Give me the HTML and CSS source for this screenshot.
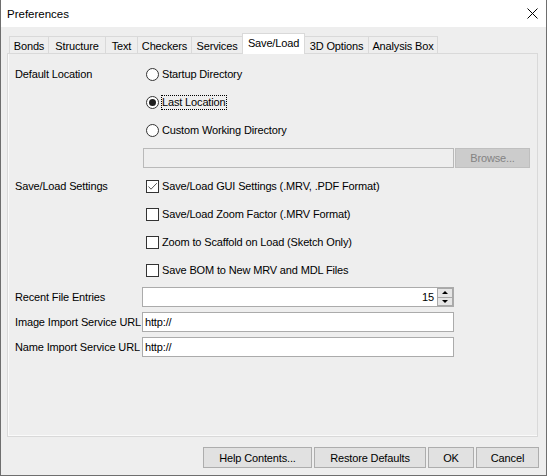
FILE: index.html
```html
<!DOCTYPE html>
<html>
<head>
<meta charset="utf-8">
<link rel="stylesheet" href="styles.css">
</head>
<body>
<div class="window">
  <div class="titlebar">
    <span class="title">Preferences</span>
    <svg class="close" width="11" height="11" viewBox="0 0 11 11"><path d="M0.5 0.5 L10.5 10.5 M10.5 0.5 L0.5 10.5" stroke="#000" stroke-width="1" fill="none"/></svg>
  </div>
  <div class="main">
    <div class="tabs">
      <div class="tab w-bonds">Bonds</div>
      <div class="tab w-structure">Structure</div>
      <div class="tab w-text">Text</div>
      <div class="tab w-checkers">Checkers</div>
      <div class="tab w-services">Services</div>
      <div class="tab active w-saveload">Save/Load</div>
      <div class="tab w-3d">3D Options</div>
      <div class="tab w-analysis">Analysis Box</div>
    </div>
    <div class="panel">
      <div class="row">
        <div class="label">Default Location</div>
        <div class="opt"><span class="radio"></span><span>Startup Directory</span></div>
      </div>
      <div class="row">
        <div class="label"></div>
        <div class="opt"><span class="radio checked"></span><span class="focus">Last Location</span></div>
      </div>
      <div class="row">
        <div class="label"></div>
        <div class="opt"><span class="radio"></span><span>Custom Working Directory</span></div>
      </div>
      <div class="row">
        <div class="label"></div>
        <div class="dirline"><div class="field disabled dirfield"></div><div class="btn disabled-btn browse">Browse...</div></div>
      </div>
      <div class="row">
        <div class="label">Save/Load Settings</div>
        <div class="opt"><span class="check"><svg width="11" height="11" viewBox="0 0 11 11"><path d="M1.5 5.5 L4 8.2 L9.8 2.2" stroke="#555" stroke-width="1" fill="none"/></svg></span><span>Save/Load GUI Settings (.MRV, .PDF Format)</span></div>
      </div>
      <div class="row">
        <div class="label"></div>
        <div class="opt"><span class="check"></span><span>Save/Load Zoom Factor (.MRV Format)</span></div>
      </div>
      <div class="row">
        <div class="label"></div>
        <div class="opt"><span class="check"></span><span>Zoom to Scaffold on Load (Sketch Only)</span></div>
      </div>
      <div class="row">
        <div class="label"></div>
        <div class="opt"><span class="check"></span><span>Save BOM to New MRV and MDL Files</span></div>
      </div>
      <div class="fields">
        <div class="label">Recent File Entries</div>
        <div class="field spinner">
          <div class="spin-val">15</div>
          <div class="spin-btns"><div class="spin-btn"><span class="arr-up"></span></div><div class="spin-btn"><span class="arr-down"></span></div></div>
        </div>
        <div class="label">Image Import Service URL</div>
        <div class="field url">http://</div>
        <div class="label">Name Import Service URL</div>
        <div class="field url">http://</div>
      </div>
    </div>
    <div class="buttons">
      <div class="btn w-help">Help Contents...</div>
      <div class="btn w-restore">Restore Defaults</div>
      <div class="btn w-ok">OK</div>
      <div class="btn w-cancel">Cancel</div>
    </div>
  </div>
</div>
</body>
</html>
```
FILE: styles.css
```css
* { box-sizing: border-box; }
body {
  margin: 0;
  font-family: "Liberation Sans", Arial, sans-serif;
  font-size: 11px;
  letter-spacing: -0.15px;
  color: #000;
  background: #fff;
}
.window {
  width: 547px;
  height: 476px;
  border: 1px solid #6e6e6e;
  border-top: none;
  background: #eeeeee;
  display: flex;
  flex-direction: column;
}
.titlebar {
  height: 27px;
  flex: none;
  background: #fff;
  display: flex;
  align-items: center;
  justify-content: space-between;
  padding: 0 8px 0 6px;
}
.title { font-size: 11.5px; letter-spacing: 0; }
.close { display: block; }
.main {
  flex: 1;
  padding: 6px 8px 0 6px;
  display: flex;
  flex-direction: column;
}
.tabs {
  display: flex;
  align-items: flex-end;
  height: 20px;
  margin-left: 2px;
  position: relative;
  z-index: 1;
}
.tab {
  height: 17px;
  border: 1px solid #d9d9d9;
  border-bottom: none;
  border-right: none;
  background: #eeeeee;
  display: flex;
  align-items: center;
  justify-content: center;
  padding-top: 1px;
}
.tab:last-child { border-right: 1px solid #d9d9d9; }
.tab.active {
  height: 21px;
  margin-bottom: -1px;
  background: #fff;
  border-right: 1px solid #d9d9d9;
  padding-top: 0;
  padding-bottom: 2px;
}
.tab.active + .tab { border-left: none; }
.w-bonds { width: 39px; }
.w-structure { width: 57px; }
.w-text { width: 32px; }
.w-checkers { width: 54px; }
.w-services { width: 51px; }
.w-saveload { width: 63px; }
.w-3d { width: 63px; }
.w-analysis { width: 70px; }
.panel {
  height: 384px;
  border: 1px solid #d9d9d9;
  box-shadow: inset 1px 0 0 #fafafa, inset 0 -1px 0 #fafafa;
  background: #eeeeee;
  padding: 6px 0 0 7px;
}
.row {
  display: grid;
  grid-template-columns: 127px auto;
  align-items: center;
  height: 28px;
}
.label { white-space: nowrap; }
.opt {
  display: flex;
  align-items: center;
  gap: 3px;
  margin-left: 4px;
  line-height: 13px;
}
.radio {
  width: 13px;
  height: 13px;
  border: 1px solid #333;
  border-radius: 50%;
  background: #fff;
  display: flex;
  align-items: center;
  justify-content: center;
  flex: none;
}
.radio.checked::after {
  content: "";
  width: 7px;
  height: 7px;
  border-radius: 50%;
  background: #1e1e1e;
}
.focus {
  border: 1px dotted #000;
  margin-left: -1px;
}
.check {
  width: 13px;
  height: 13px;
  border: 1px solid #333;
  background: #fff;
  flex: none;
  display: flex;
}
.check svg { display: block; }
.dirline {
  display: flex;
  gap: 1px;
  margin-left: 1px;
}
.field {
  height: 20px;
  border: 1px solid #ababab;
  background: #fff;
}
.field.disabled {
  background: #eeeeee;
  border-color: #b9b9b9;
}
.dirfield { width: 311px; }
.btn {
  height: 21px;
  border: 1px solid #adadad;
  background: #e1e1e1;
  display: flex;
  align-items: center;
  justify-content: center;
}
.browse {
  width: 75px;
  height: 20px;
}
.disabled-btn {
  background: #cccccc;
  border-color: #bfbfbf;
  color: #838383;
}
.fields {
  margin-top: 3px;
  display: grid;
  grid-template-columns: 127px 312px;
  grid-auto-rows: 20px;
  row-gap: 5px;
  align-items: center;
}
.spinner {
  display: flex;
}
.spin-val {
  flex: 1;
  text-align: right;
  padding-right: 3px;
  line-height: 18px;
}
.spin-btns {
  width: 16px;
  display: flex;
  flex-direction: column;
  border: 1px solid #a9a9a9;
}
.spin-btn {
  flex: 1;
  background: #e6e6e6;
  display: flex;
  align-items: center;
  justify-content: center;
}
.spin-btn + .spin-btn { border-top: 1px solid #a9a9a9; }
.arr-up {
  width: 0; height: 0;
  border-left: 3px solid transparent;
  border-right: 3px solid transparent;
  border-bottom: 3px solid #000;
}
.arr-down {
  width: 0; height: 0;
  border-left: 3px solid transparent;
  border-right: 3px solid transparent;
  border-top: 3px solid #000;
}
.url {
  padding-left: 2px;
  line-height: 18px;
}
.buttons {
  display: flex;
  justify-content: flex-end;
  gap: 2px;
  margin-top: 10px;
  margin-right: -1px;
}
.w-help { width: 109px; }
.w-restore { width: 112px; }
.w-ok { width: 46px; }
.w-cancel { width: 63px; }
```
